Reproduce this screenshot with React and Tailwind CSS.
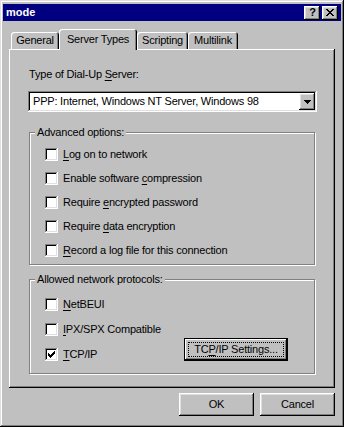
const raised =
  'shadow-[inset_-1px_-1px_#000,inset_1px_1px_#fff,inset_-2px_-2px_#808080,inset_2px_2px_#dfdfdf]';
const sunken =
  'shadow-[inset_-1px_-1px_#fff,inset_1px_1px_#808080,inset_-2px_-2px_#dfdfdf,inset_2px_2px_#000]';

function U({ children }) {
  return <span className="underline underline-offset-[2px]">{children}</span>;
}

function Check({ checked }) {
  return (
    <div className={`w-[13px] h-[13px] shrink-0 bg-white flex items-center justify-center ${sunken}`}>
      {checked && (
        <svg width="7" height="7" viewBox="0 0 7 7" shapeRendering="crispEdges">
          <path
            d="M6 0h1v1h-1z M5 1h2v1h-2z M0 2h1v1h-1z M4 2h3v1h-3z M0 3h2v1h-2z M3 3h3v1h-3z M0 4h5v1h-5z M1 5h3v1h-3z M2 6h1v1h-1z"
            fill="#000"
          />
        </svg>
      )}
    </div>
  );
}

function CheckRow({ checked, children, className = '' }) {
  return (
    <div className={`flex items-center gap-[5px] h-[13px] ${className}`}>
      <Check checked={checked} />
      <span className="whitespace-nowrap">{children}</span>
    </div>
  );
}

function Group({ title, className = '', children }) {
  return (
    <div
      className={`flex flex-col border border-[#808080] shadow-[inset_1px_1px_#fff,1px_1px_#fff] ${className}`}
    >
      <div className="-mt-[7px] ml-[5px] self-start h-[13px] px-[2px] bg-[#c0c0c0] whitespace-nowrap">
        {title}
      </div>
      {children}
    </div>
  );
}

function Tab({ active, width, children }) {
  if (active) {
    return (
      <div
        className={`${width} h-[21px] -mb-[1px] relative z-10 bg-[#c0c0c0] rounded-t-[3px] flex items-center justify-center pb-[1px] shadow-[inset_1px_1px_#fff,inset_-1px_0_#000,inset_-2px_0_#808080]`}
      >
        {children}
      </div>
    );
  }
  return (
    <div
      className={`${width} h-[17px] rounded-t-[3px] flex items-center justify-center shadow-[inset_1px_1px_#fff,inset_-1px_0_#000,inset_-2px_0_#808080]`}
    >
      {children}
    </div>
  );
}

function CapButton({ children }) {
  return (
    <div className={`w-[16px] h-[14px] bg-[#c0c0c0] flex items-center justify-center ${raised}`}>
      {children}
    </div>
  );
}

export default function App() {
  return (
    <div
      className="w-[344px] h-[427px] bg-[#c0c0c0] pt-[4px] px-[3px] flex flex-col text-[11px] leading-[13px] tracking-[-0.2px] text-black font-['Liberation_Sans',Arial,sans-serif] shadow-[inset_-1px_-1px_#000,inset_1px_1px_#dfdfdf,inset_-2px_-2px_#808080,inset_2px_2px_#fff]"
    >
      {/* title bar */}
      <div className="h-[17px] bg-[#000080] flex items-center pl-[3px] pr-[3px]">
        <span className="font-bold text-white tracking-normal">mode</span>
        <div className="ml-auto flex gap-[2px]">
          <CapButton>
            <span className="font-bold text-[11px] leading-none pl-[1px]">?</span>
          </CapButton>
          <CapButton>
            <svg width="8" height="7" viewBox="0 0 8 7" shapeRendering="crispEdges">
              <path
                d="M0 0h2v1h-2z M6 0h2v1h-2z M1 1h2v1h-2z M5 1h2v1h-2z M2 2h4v1h-4z M3 3h2v1h-2z M2 4h4v1h-4z M1 5h2v1h-2z M5 5h2v1h-2z M0 6h2v1h-2z M6 6h2v1h-2z"
                fill="#000"
              />
            </svg>
          </CapButton>
        </div>
      </div>

      {/* tabs */}
      <div className="mt-[8px] mx-[6px] h-[20px] flex items-end pl-[2px]">
        <Tab width="w-[48px]">General</Tab>
        <Tab width="w-[78px]" active>Server Types</Tab>
        <Tab width="w-[51px]">Scripting</Tab>
        <Tab width="w-[50px]">Multilink</Tab>
      </div>

      {/* tab panel */}
      <div className="mx-[6px] h-[339px] flex flex-col pt-[19px] pl-[19px] pr-[18px] shadow-[inset_-1px_-1px_#000,inset_1px_1px_#fff,inset_-2px_-2px_#808080]">
        <div className="h-[13px] pl-[1px]">
          Type of Dial-Up <U>S</U>erver:
        </div>

        <div className={`mt-[10px] h-[21px] bg-white flex items-center p-[2px] ${sunken}`}>
          <span className="flex-1 pl-[3px] whitespace-nowrap">
            PPP: Internet, Windows NT Server, Windows 98
          </span>
          <div className={`w-[16px] self-stretch bg-[#c0c0c0] flex items-center justify-center ${raised}`}>
            <svg width="7" height="4" viewBox="0 0 7 4" shapeRendering="crispEdges">
              <path d="M0 0h7v1h-7z M1 1h5v1h-5z M2 2h3v1h-3z M3 3h1v1h-1z" fill="#000" />
            </svg>
          </div>
        </div>

        <Group title="Advanced options:" className="mt-[20px] ml-[1px] mr-[2px] h-[133px]">
          <div className="flex flex-col gap-[11px] mt-[9px] pl-[15px]">
            <CheckRow>
              <U>L</U>og on to network
            </CheckRow>
            <CheckRow>
              Enable software <U>c</U>ompression
            </CheckRow>
            <CheckRow>
              Require <U>e</U>ncrypted password
            </CheckRow>
            <CheckRow>
              Require <U>d</U>ata encryption
            </CheckRow>
            <CheckRow>
              <U>R</U>ecord a log file for this connection
            </CheckRow>
          </div>
        </Group>

        <Group title="Allowed network protocols:" className="mt-[14px] ml-[1px] mr-[2px] h-[95px]">
          <div className="flex flex-col pl-[15px] pr-[26px]">
            <CheckRow className="mt-[12px]">
              <U>N</U>etBEUI
            </CheckRow>
            <CheckRow className="mt-[12px]">
              <U>I</U>PX/SPX Compatible
            </CheckRow>
            <div className="mt-[2px] flex items-end">
              <CheckRow checked>
                <U>T</U>CP/IP
              </CheckRow>
              <button className="ml-auto w-[104px] h-[23px] border border-black bg-[#c0c0c0] p-[3px] flex shadow-[inset_-1px_-1px_#000,inset_1px_1px_#fff,inset_-2px_-2px_#808080]">
                <span className="flex-1 border border-dotted border-black flex items-center justify-center whitespace-nowrap">
                  TC<U>P</U>/IP Settings...
                </span>
              </button>
            </div>
          </div>
        </Group>
      </div>

      {/* dialog buttons */}
      <div className="mt-[5px] mx-[6px] flex justify-end gap-[6px]">
        <button className={`w-[75px] h-[23px] bg-[#c0c0c0] flex items-center justify-center ${raised}`}>
          OK
        </button>
        <button className={`w-[75px] h-[23px] bg-[#c0c0c0] flex items-center justify-center ${raised}`}>
          Cancel
        </button>
      </div>
    </div>
  );
}
